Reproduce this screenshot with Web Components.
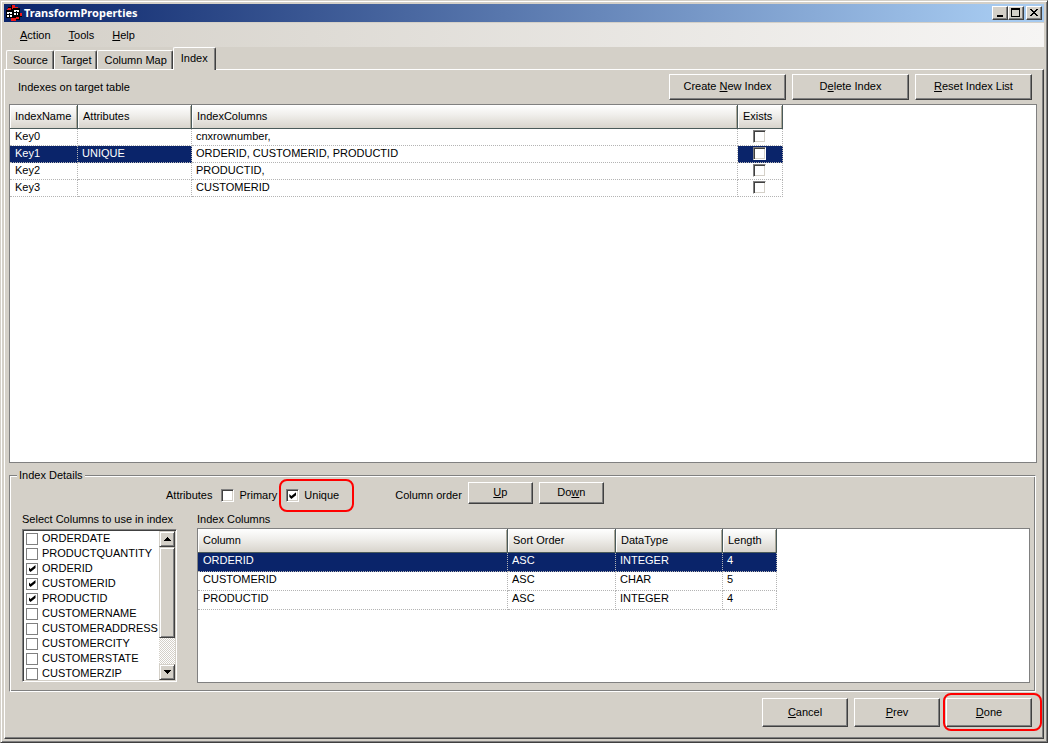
<!DOCTYPE html>
<html lang="en">
<head>
<meta charset="utf-8">
<title>TransformProperties</title>
<style>
  html, body { margin: 0; height: 100%; }
  body { font: 11px/13px "Liberation Sans", Arial, sans-serif; color: #000; background: #d4d0c8; }
</style>
</head>
<body>
<transform-window></transform-window>

<script>
const define = (name, html, setup) => {
  const tpl = document.createElement('template');
  tpl.innerHTML = '<style>*{box-sizing:border-box}:host{box-sizing:border-box}</style>' + html;
  customElements.define(name, class extends HTMLElement {
    connectedCallback() {
      if (this.shadowRoot) return;
      this.attachShadow({ mode: 'open' }).append(tpl.content.cloneNode(true));
      if (setup) setup(this, this.shadowRoot);
    }
  });
};

/* Raised push button */
define('push-button', `
<style>
  :host { display: block; position: relative; width: 86px; height: 29px; }
  button { width: 100%; height: 100%; margin: 0; padding: 0 0 1px; font: inherit; color: #000; background: #d4d0c8;
    border: 1px solid; border-color: #fff #404040 #404040 #fff; box-shadow: inset -1px -1px #808080; }
  :host([marked])::after { content: ""; position: absolute; inset: -5px -10px -4px -3px; border: 2px solid #f00;
    border-radius: 8px; pointer-events: none; }
</style>
<button type="button"><slot></slot></button>`);

/* Tick box with an optional label */
define('check-box', `
<style>
  :host { display: block; position: relative; }
  label { display: flex; align-items: center; gap: 5px; }
  input { appearance: none; display: grid; place-items: center; flex: none; width: 13px; height: 13px; margin: 0; background: #fff;
    border: 1px solid; border-color: #808080 #fff #fff #808080; box-shadow: inset 1px 1px #404040, inset -1px -1px #d4d0c8; }
  input:checked::after { content: ""; width: 7px; height: 7px; background: #000;
    clip-path: polygon(0 28%, 29% 57%, 100% 0, 100% 43%, 29% 100%, 0 72%); }
  :host([flat]) label { gap: 4px; height: 15px; }
  :host([flat]) input { width: 12px; height: 12px; border-color: #808080; box-shadow: none; }
  :host([marked])::after { content: ""; position: absolute; inset: -10px -15px -10px -7px; border: 2px solid #f00;
    border-radius: 8px; pointer-events: none; }
</style>
<label><input type="checkbox"><slot></slot></label>`, (host, root) => {
  const input = root.querySelector('input');
  input.checked = host.hasAttribute('checked');
  if (host.title) { input.setAttribute('aria-label', host.title); host.removeAttribute('title'); }
});

/* Data grid: "columns" lists the headings, "widths" their widths, "rows" the data as JSON */
define('data-grid', `
<style>
  :host { display: block; background: #fff; border: 1px solid #808080; overflow: hidden; min-width: 0; --row: 17px; --lift: 2px; }
  table { border-collapse: separate; border-spacing: 0; table-layout: fixed; width: 0; }
  th { height: 24px; padding: 0 0 0 5px; text-align: left; font-weight: normal; white-space: nowrap;
    background: linear-gradient(#fff, #f1f0ed 40%, #d8d4cc); border-right: 1px solid #4a5a5a; border-bottom: 1px solid #4a5a5a;
    box-shadow: inset 1px 1px #fff, inset -1px 0 #aca899; }
  td { height: var(--row); padding: 0 0 var(--lift) 4px; white-space: nowrap; border-right: 1px dotted #b4b4b4; border-bottom: 1px dotted #b4b4b4; }
  td:first-child { padding-left: 5px; }
  td.tick { padding: 0 0 2px 15px; }
  td.sel { background: #0a246a; color: #fff; }
</style>
<table><colgroup></colgroup><thead><tr></tr></thead><tbody></tbody></table>`, (host, root) => {
  const data = JSON.parse(host.getAttribute('rows'));
  const widths = host.getAttribute('widths').split(',');
  root.querySelector('table').style.width = widths.reduce((a, b) => a + Number(b), 0) + 'px';
  widths.forEach(w => {
    const col = document.createElement('col');
    col.style.width = w + 'px';
    root.querySelector('colgroup').append(col);
  });
  host.getAttribute('columns').split(',').forEach(name => {
    const th = document.createElement('th');
    th.scope = 'col';
    th.textContent = name;
    root.querySelector('thead tr').append(th);
  });
  const selected = Number(host.getAttribute('selected'));
  const plain = host.getAttribute('editing');
  data.forEach((cells, r) => {
    const tr = document.createElement('tr');
    cells.forEach((value, c) => {
      const td = document.createElement('td');
      if (r === selected && String(c) !== plain) td.classList.add('sel');
      if (value === false) {
        td.classList.add('tick');
        const box = document.createElement('check-box');
        box.title = cells[0] + ' exists';
        td.append(box);
      } else td.textContent = value;
      tr.append(td);
    });
    root.querySelector('tbody').append(tr);
  });
});

/* Scrolling list of tick boxes */
define('check-list', `
<style>
  :host { display: flex; height: 153px; margin: 1px 0; background: #fff; border: 1px solid; border-color: #808080 #fff #fff #808080;
    box-shadow: inset 1px 1px #404040, inset -1px -1px #d4d0c8; padding: 1px; }
  .items { flex: 1; min-width: 0; overflow: hidden; white-space: nowrap; padding-left: 2px; }
  .bar { display: flex; flex-direction: column; width: 16px;
    background: repeating-conic-gradient(#fff 0 25%, #d4d0c8 0 50%) 0 0 / 2px 2px; }
  button, .thumb { background: #d4d0c8; border: 1px solid; border-color: #d4d0c8 #404040 #404040 #d4d0c8;
    box-shadow: inset 1px 1px #fff, inset -1px -1px #808080; }
  button { display: grid; place-items: center; height: 16px; padding: 0; margin: 0; }
  .thumb { height: 91px; }
  .space { flex: 1; }
  svg { display: block; }
</style>
<div class="items"><slot></slot></div>
<div class="bar">
  <button type="button" aria-label="Scroll up"><svg width="7" height="4" shape-rendering="crispEdges"><path d="M3 0h1v1h1v1h1v1h1v1H0V3h1V2h1V1h1z"/></svg></button>
  <div class="thumb"></div><div class="space"></div>
  <button type="button" aria-label="Scroll down"><svg width="7" height="4" shape-rendering="crispEdges"><path d="M0 0h7v1H6v1H5v1H4v1H3V3H2V2H1V1H0z"/></svg></button>
</div>`);

/* Title bar */
define('title-bar', `
<style>
  :host { display: flex; align-items: center; height: 18px; padding: 0 2px; color: #fff;
    background: linear-gradient(90deg, #0a246a, #a6caf0 96%); }
  h1 { flex: 1; margin: 0 0 0 2px; font: bold 11px/16px "Noto Sans", sans-serif; }
  button { display: grid; place-items: center; width: 16px; height: 14px; margin: 0; padding: 0; background: #d4d0c8;
    border: 1px solid; border-color: #fff #404040 #404040 #fff; box-shadow: inset -1px -1px #808080; }
  button:last-child { margin-left: 2px; }
  svg { display: block; }
</style>
<svg width="16" height="16" shape-rendering="crispEdges" aria-hidden="true">
  <path fill="#000" d="M5 0h4v2h3v2h2v4h2v4h-2v3h-4v1H5v-3H1V5h1V2h3z"/>
  <path fill="#f01818" d="M6 0h3v4H6zM9 2h3v1H9zM2 3h3v2H2zM12 8h4v3h-4zM5 13h5v3H5zM10 12h3v2h-3zM1 4h2v1H1z"/>
  <path fill="#000" d="M0 5h8v8H0zM7 3h7v8H7z"/>
  <path fill="#fff" d="M1 7h2v2H1zM4 7h2v2H4zM1 10h2v2H1zM4 10h2v2H4zM8 5h2v2H8zM11 5h2v2h-2zM8 8h2v2H8zM11 8h1v2h-1zM3 7h1v1H3zM10 5h1v1h-1z"/>
</svg>
<h1><slot></slot></h1>
<button type="button" aria-label="Minimize"><svg width="12" height="10" shape-rendering="crispEdges"><path d="M3 7h6v2H3z"/></svg></button>
<button type="button" aria-label="Maximize"><svg width="12" height="10" shape-rendering="crispEdges"><path fill-rule="evenodd" d="M1 0h9v9H1zM2 2v6h7V2z"/></svg></button>
<button type="button" aria-label="Close"><svg width="12" height="10" shape-rendering="crispEdges"><path d="M2 1h2v1h1v1h2V2h1V1h2v1H9v1H8v1H7v1h1v1h1v1h1v1H8V7H7V6H5v1H4v1H2V7h1V6h1V5h1V4H4V3H3V2H2z"/></svg></button>`);

/* Menu bar */
define('menu-bar', `
<style>
  :host { display: flex; gap: 18px; height: 24px; margin-top: 1px; padding: 0 16px;
    background: linear-gradient(90deg, #d4d0c8, #f6f5f4); }
  button { border: 0; margin: 0; padding: 0; background: none; font: inherit; color: #000; }
</style>
<button type="button"><u>A</u>ction</button>
<button type="button"><u>T</u>ools</button>
<button type="button"><u>H</u>elp</button>`);

/* Tab strip */
define('tab-strip', `
<style>
  :host { display: block; padding-left: 2px; }
  div { display: flex; align-items: flex-end; height: 22px; }
  button { height: 19px; margin: 0; padding: 0 5px 0 6px; font: inherit; color: #000; background: #d4d0c8; white-space: nowrap;
    border: 1px solid; border-color: #fff #404040 transparent #fff; border-bottom: 0; border-radius: 2px 2px 0 0;
    box-shadow: inset -1px 0 #808080; }
  button[aria-selected=true] { position: relative; height: 23px; margin: 0 0 -1px; padding: 0 7px 1px; }
</style>
<div role="tablist">
<button type="button" role="tab">Source</button>
<button type="button" role="tab">Target</button>
<button type="button" role="tab">Column Map</button>
<button type="button" role="tab" aria-selected="true">Index</button>
</div>`);

/* Details of the selected index */
define('index-details', `
<style>
  :host { display: block; margin: 6px 1px 0 0; }
  fieldset { margin: 0; padding: 0 5px 8px 12px; border: 1px solid; border-color: #808080 #fff #fff #808080;
    box-shadow: inset 1px 1px #fff, inset -1px -1px #808080; min-width: 0; }
  legend { margin-left: -5px; padding: 0 2px; line-height: 13px; background: #d4d0c8; }
  .options { display: flex; align-items: center; height: 22px; padding-left: 144px; white-space: nowrap; }
  .options check-box { margin: 5px 0 0 9px; }
  .options span { margin-top: 4px; }
  .order { margin-left: 56px; }
  .options push-button { width: 65px; height: 22px; margin-left: 6px; }
  .lists { display: grid; grid-template-columns: 155px minmax(0, 1fr); column-gap: 20px; row-gap: 2px; margin-top: 8px; }
  .lists span { line-height: 14px; white-space: nowrap; }
  data-grid { height: 155px; --row: 19px; --lift: 4px; }
</style>
<fieldset>
  <legend>Index Details</legend>
  <div class="options">
    <span>Attributes</span>
    <check-box>Primary</check-box>
    <check-box checked marked>Unique</check-box>
    <span class="order">Column order</span>
    <push-button><u>U</u>p</push-button>
    <push-button>Do<u>w</u>n</push-button>
  </div>
  <div class="lists">
    <span>Select Columns to use in index</span>
    <span>Index Columns</span>
    <check-list>
      <check-box flat>ORDERDATE</check-box>
      <check-box flat>PRODUCTQUANTITY</check-box>
      <check-box flat checked>ORDERID</check-box>
      <check-box flat checked>CUSTOMERID</check-box>
      <check-box flat checked>PRODUCTID</check-box>
      <check-box flat>CUSTOMERNAME</check-box>
      <check-box flat>CUSTOMERADDRESS</check-box>
      <check-box flat>CUSTOMERCITY</check-box>
      <check-box flat>CUSTOMERSTATE</check-box>
      <check-box flat>CUSTOMERZIP</check-box>
    </check-list>
    <data-grid columns="Column,Sort Order,DataType,Length" widths="310,108,107,54" selected="0"
      rows='[["ORDERID","ASC","INTEGER","4"],["CUSTOMERID","ASC","CHAR","5"],["PRODUCTID","ASC","INTEGER","4"]]'></data-grid>
  </div>
</fieldset>`);

/* The window frame and the Index page */
define('transform-window', `
<style>
  :host { display: flex; flex-direction: column; min-height: 100vh; padding: 3px; background: #d4d0c8;
    border: 1px solid; border-color: #d4d0c8 #404040 #404040 #d4d0c8;
    box-shadow: inset 1px 1px #fff, inset -1px -1px #808080; }
  main { flex: 1; display: flex; flex-direction: column; padding: 4px 6px 11px 4px;
    border: 1px solid; border-color: #fff #404040 #404040 #fff; box-shadow: inset -1px -1px #808080; }
  .tools, footer { display: flex; align-items: center; gap: 6px; padding-right: 5px; }
  .tools { padding-left: 9px; margin-bottom: 4px; }
  .tools span { flex: 1; }
  .tools push-button { width: 117px; height: 26px; }
  .grid { flex: 1; }
  footer { justify-content: flex-end; margin-top: 6px; }
</style>
<title-bar>TransformProperties</title-bar>
<menu-bar></menu-bar>
<tab-strip></tab-strip>
<main>
  <div class="tools">
    <span>Indexes on target table</span>
    <push-button>Create <u>N</u>ew Index</push-button>
    <push-button>D<u>e</u>lete Index</push-button>
    <push-button><u>R</u>eset Index List</push-button>
  </div>
  <data-grid class="grid" columns="IndexName,Attributes,IndexColumns,Exists" widths="68,114,546,45" selected="1" editing="2"
    rows='[["Key0","","cnxrownumber,",false],["Key1","UNIQUE","ORDERID, CUSTOMERID, PRODUCTID",false],["Key2","","PRODUCTID,",false],["Key3","","CUSTOMERID",false]]'></data-grid>
  <index-details></index-details>
  <footer>
    <push-button><u>C</u>ancel</push-button>
    <push-button><u>P</u>rev</push-button>
    <push-button marked><u>D</u>one</push-button>
  </footer>
</main>`);
</script>
</body>
</html>
